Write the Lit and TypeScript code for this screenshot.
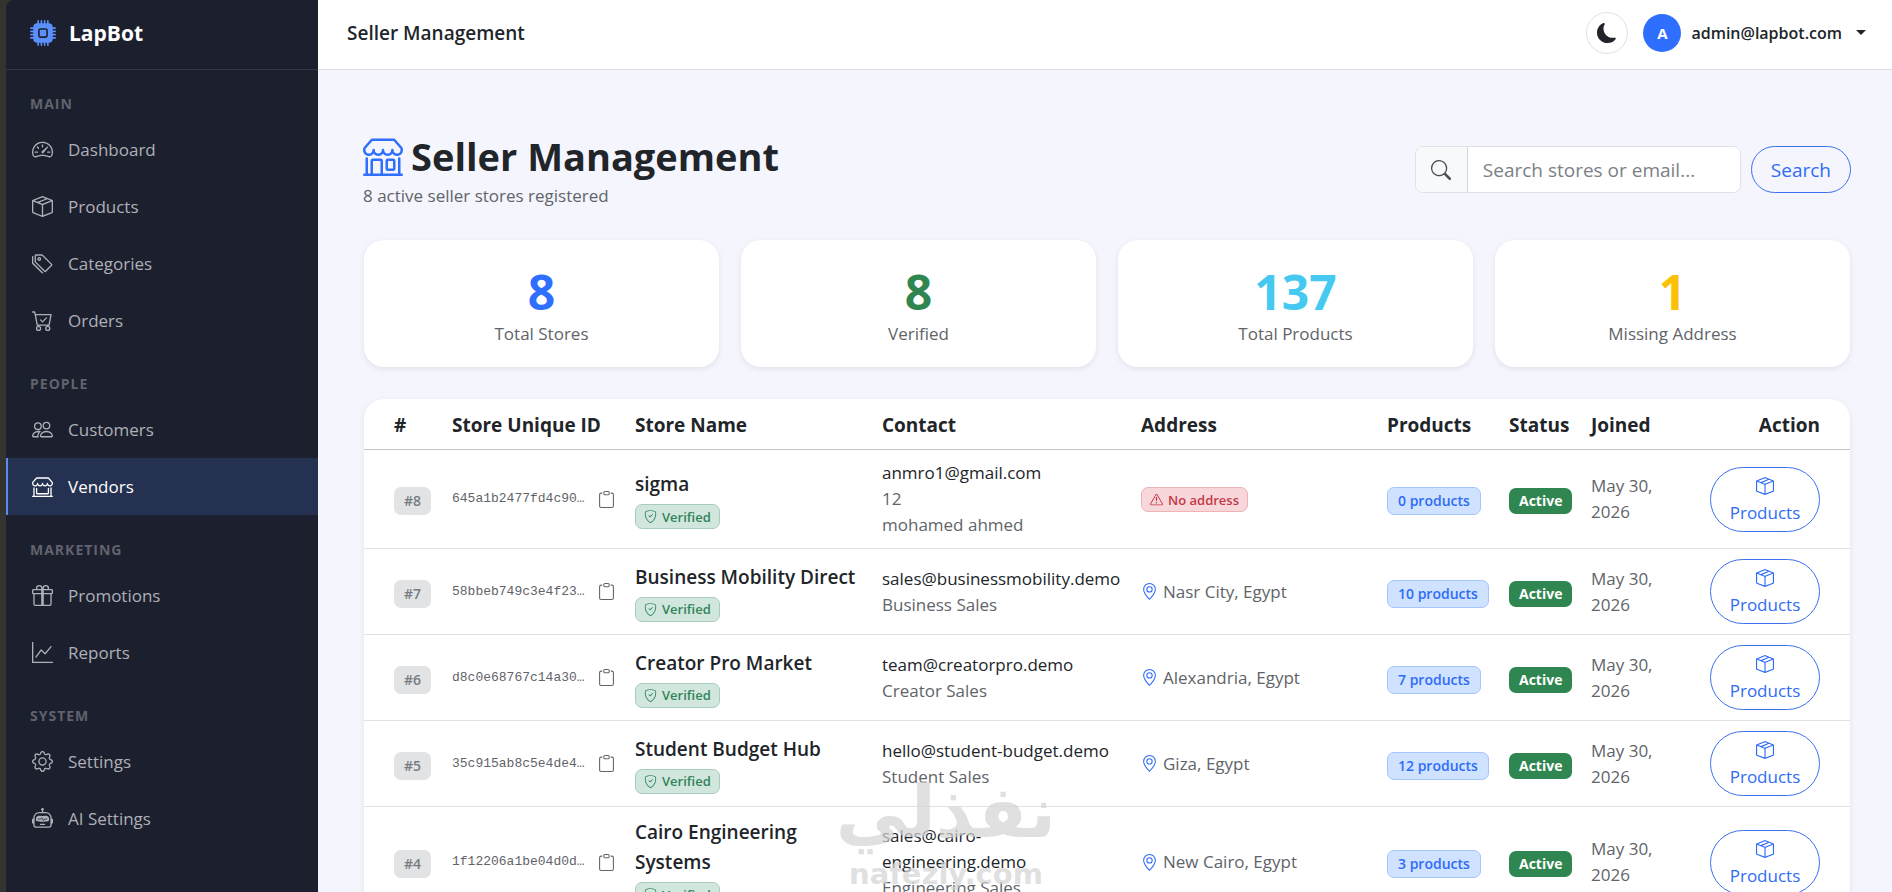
import { LitElement, html, css, svg } from "lit";
import { customElement, property } from "lit/decorators.js";
import { classMap } from "lit/directives/class-map.js";

const AWNING =
  "M2.97 1.35A1 1 0 0 1 3.73 1h8.54a1 1 0 0 1 .76.35l2.609 3.044A1.5 1.5 0 0 1 16 5.37v.255a2.375 2.375 0 0 1-4.25 1.458A2.37 2.37 0 0 1 9.875 8 2.37 2.37 0 0 1 8 7.083 2.37 2.37 0 0 1 6.125 8a2.37 2.37 0 0 1-1.875-.917A2.375 2.375 0 0 1 0 5.625V5.37a1.5 1.5 0 0 1 .361-.976zm1.78 4.275a1.375 1.375 0 0 0 2.75 0 .5.5 0 0 1 1 0 1.375 1.375 0 0 0 2.75 0 .5.5 0 0 1 1 0 1.375 1.375 0 1 0 2.75 0V5.37a.5.5 0 0 0-.12-.325L12.27 2H3.73L1.12 5.045A.5.5 0 0 0 1 5.37v.255a1.375 1.375 0 0 0 2.75 0 .5.5 0 0 1 1 0";

const ICONS: Record<string, string[]> = {
  cpu: [
    "M6.5 6a.5.5 0 0 0-.5.5v3a.5.5 0 0 0 .5.5h3a.5.5 0 0 0 .5-.5v-3a.5.5 0 0 0-.5-.5z",
    "M5.5.5a.5.5 0 0 0-1 0V2A2.5 2.5 0 0 0 2 4.5H.5a.5.5 0 0 0 0 1H2v1H.5a.5.5 0 0 0 0 1H2v1H.5a.5.5 0 0 0 0 1H2v1H.5a.5.5 0 0 0 0 1H2A2.5 2.5 0 0 0 4.5 14v1.5a.5.5 0 0 0 1 0V14h1v1.5a.5.5 0 0 0 1 0V14h1v1.5a.5.5 0 0 0 1 0V14h1v1.5a.5.5 0 0 0 1 0V14a2.5 2.5 0 0 0 2.5-2.5h1.5a.5.5 0 0 0 0-1H14v-1h1.5a.5.5 0 0 0 0-1H14v-1h1.5a.5.5 0 0 0 0-1H14v-1h1.5a.5.5 0 0 0 0-1H14A2.5 2.5 0 0 0 11.5 2V.5a.5.5 0 0 0-1 0V2h-1V.5a.5.5 0 0 0-1 0V2h-1V.5a.5.5 0 0 0-1 0V2h-1zm1 4.5h3A1.5 1.5 0 0 1 11 6.5v3A1.5 1.5 0 0 1 9.5 11h-3A1.5 1.5 0 0 1 5 9.5v-3A1.5 1.5 0 0 1 6.5 5",
  ],
  speedometer: [
    "M8 4a.5.5 0 0 1 .5.5V6a.5.5 0 0 1-1 0V4.5A.5.5 0 0 1 8 4M3.732 5.732a.5.5 0 0 1 .707 0l.915.914a.5.5 0 1 1-.708.708l-.914-.915a.5.5 0 0 1 0-.707M2 10a.5.5 0 0 1 .5-.5h1.586a.5.5 0 0 1 0 1H2.5A.5.5 0 0 1 2 10m9.5 0a.5.5 0 0 1 .5-.5h1.5a.5.5 0 0 1 0 1H12a.5.5 0 0 1-.5-.5m.754-4.246a.39.39 0 0 0-.527-.02L7.547 9.31a.91.91 0 1 0 1.302 1.258l3.434-4.297a.39.39 0 0 0-.029-.518z",
    "M0 10a8 8 0 1 1 15.547 2.661c-.442 1.253-1.845 1.602-2.932 1.25C11.309 13.488 9.475 13 8 13c-1.474 0-3.31.488-4.615.911-1.087.352-2.49.003-2.932-1.25A8 8 0 0 1 0 10m8-7a7 7 0 0 0-6.603 9.329c.203.575.923.876 1.68.63C4.397 12.533 6.358 12 8 12s3.604.532 4.923.96c.757.245 1.477-.056 1.68-.631A7 7 0 0 0 8 3",
  ],
  box: [
    "M8.186 1.113a.5.5 0 0 0-.372 0L1.846 3.5l2.404.961L10.404 2zm3.564 1.426L5.596 5 8 5.961 14.154 3.5zm3.25 1.7-6.5 2.6v7.922l6.5-2.6V4.24zM7.5 14.762V6.838L1 4.239v7.923zM7.443.184a1.5 1.5 0 0 1 1.114 0l7.129 2.852A.5.5 0 0 1 16 3.5v8.662a1 1 0 0 1-.629.928l-7.185 2.874a.5.5 0 0 1-.372 0L.63 13.09a1 1 0 0 1-.63-.928V3.5a.5.5 0 0 1 .314-.464z",
  ],
  tags: [
    "M3 2v4.586l7 7L14.586 9l-7-7zM2 2a1 1 0 0 1 1-1h4.586a1 1 0 0 1 .707.293l7 7a1 1 0 0 1 0 1.414l-4.586 4.586a1 1 0 0 1-1.414 0l-7-7A1 1 0 0 1 2 6.586z",
    "M5.5 5a.5.5 0 1 1 0-1 .5.5 0 0 1 0 1m0 1a1.5 1.5 0 1 0 0-3 1.5 1.5 0 0 0 0 3M1 7.086a1 1 0 0 0 .293.707L8.75 15.25l-.043.043a1 1 0 0 1-1.414 0l-7-7A1 1 0 0 1 0 7.586V3a1 1 0 0 1 1-1z",
  ],
  cart: [
    "M11.354 6.354a.5.5 0 0 0-.708-.708L8 8.293 6.854 7.146a.5.5 0 1 0-.708.708l1.5 1.5a.5.5 0 0 0 .708 0z",
    "M.5 1a.5.5 0 0 0 0 1h1.11l.401 1.607 1.498 7.985A.5.5 0 0 0 4 12h1a2 2 0 1 0 0 4 2 2 0 0 0 0-4h7a2 2 0 1 0 0 4 2 2 0 0 0 0-4h1a.5.5 0 0 0 .491-.408l1.5-8A.5.5 0 0 0 14.5 3H2.89l-.405-1.621A.5.5 0 0 0 2 1zm3.915 10L3.102 4h10.796l-1.313 7zM6 14a1 1 0 1 1-2 0 1 1 0 0 1 2 0m7 0a1 1 0 1 1-2 0 1 1 0 0 1 2 0",
  ],
  people: [
    "M15 14s1 0 1-1-1-4-5-4-5 3-5 4 1 1 1 1zm-7.978-1L7 12.996c.001-.264.167-1.03.76-1.72C8.312 10.629 9.282 10 11 10c1.717 0 2.687.63 3.24 1.276.593.69.758 1.457.76 1.72l-.008.002-.014.002zM11 7a2 2 0 1 0 0-4 2 2 0 0 0 0 4m3-2a3 3 0 1 1-6 0 3 3 0 0 1 6 0M6.936 9.28a6 6 0 0 0-1.23-.247A7 7 0 0 0 5 9c-4 0-5 3-5 4q0 1 1 1h4.216A2.24 2.24 0 0 1 5 13c0-1.01.377-2.042 1.09-2.904.243-.294.526-.569.846-.816M4.92 10A5.5 5.5 0 0 0 4 13H1c0-.26.164-1.03.76-1.724.545-.636 1.492-1.256 3.16-1.275ZM1.5 5.5a3 3 0 1 1 6 0 3 3 0 0 1-6 0m3-2a2 2 0 1 0 0 4 2 2 0 0 0 0-4",
  ],
  shop: [
    AWNING,
    "M1.5 8.5A.5.5 0 0 1 2 9v6h1v-5a1 1 0 0 1 1-1h3a1 1 0 0 1 1 1v5h6V9a.5.5 0 0 1 1 0v6h.5a.5.5 0 0 1 0 1H.5a.5.5 0 0 1 0-1H1V9a.5.5 0 0 1 .5-.5M4 15h3v-5H4zm5-5a1 1 0 0 1 1-1h2a1 1 0 0 1 1 1v3a1 1 0 0 1-1 1h-2a1 1 0 0 1-1-1zm3 0h-2v3h2z",
  ],
  shopWindow: [
    AWNING,
    "M1.5 8.5A.5.5 0 0 1 2 9v6h12V9a.5.5 0 0 1 1 0v6h.5a.5.5 0 0 1 0 1H.5a.5.5 0 0 1 0-1H1V9a.5.5 0 0 1 .5-.5m2 .5a.5.5 0 0 1 .5.5V13h8V9.5a.5.5 0 0 1 1 0V13a1 1 0 0 1-1 1H4a1 1 0 0 1-1-1V9.5a.5.5 0 0 1 .5-.5",
  ],
  gift: [
    "M3 2.5a2.5 2.5 0 0 1 5 0 2.5 2.5 0 0 1 5 0v.006c0 .07 0 .27-.038.494H15a1 1 0 0 1 1 1v2a1 1 0 0 1-1 1v7.5a1.5 1.5 0 0 1-1.5 1.5h-11A1.5 1.5 0 0 1 1 14.5V7a1 1 0 0 1-1-1V4a1 1 0 0 1 1-1h2.038A3 3 0 0 1 3 2.506zm1.068.5H7v-.5a1.5 1.5 0 1 0-3 0c0 .085.002.274.045.43zM9 3h2.932l.023-.07c.043-.156.045-.345.045-.43a1.5 1.5 0 0 0-3 0zM1 4v2h6V4zm8 0v2h6V4zm5 3H9v8h4.5a.5.5 0 0 0 .5-.5zm-7 8V7H2v7.5a.5.5 0 0 0 .5.5z",
  ],
  graph: [
    "M0 0h1v15h15v1H0zm14.817 3.113a.5.5 0 0 1 .07.704l-4.5 5.5a.5.5 0 0 1-.74.037L7.06 6.767l-3.656 5.027a.5.5 0 0 1-.808-.588l4-5.5a.5.5 0 0 1 .758-.06l2.609 2.61 4.15-5.073a.5.5 0 0 1 .704-.07",
  ],
  gear: [
    "M8 4.754a3.246 3.246 0 1 0 0 6.492 3.246 3.246 0 0 0 0-6.492M5.754 8a2.246 2.246 0 1 1 4.492 0 2.246 2.246 0 0 1-4.492 0",
    "M9.796 1.343c-.527-1.79-3.065-1.79-3.592 0l-.094.319a.873.873 0 0 1-1.255.52l-.292-.16c-1.64-.892-3.433.902-2.54 2.541l.159.292a.873.873 0 0 1-.52 1.255l-.319.094c-1.79.527-1.79 3.065 0 3.592l.319.094a.873.873 0 0 1 .52 1.255l-.16.292c-.892 1.64.901 3.434 2.541 2.54l.292-.159a.873.873 0 0 1 1.255.52l.094.319c.527 1.79 3.065 1.79 3.592 0l.094-.319a.873.873 0 0 1 1.255-.52l.292.16c1.64.893 3.434-.902 2.54-2.541l-.159-.292a.873.873 0 0 1 .52-1.255l.319-.094c1.79-.527 1.79-3.065 0-3.592l-.319-.094a.873.873 0 0 1-.52-1.255l.16-.292c.893-1.64-.902-3.433-2.541-2.54l-.292.159a.873.873 0 0 1-1.255-.52zm-2.633.283c.246-.835 1.428-.835 1.674 0l.094.319a1.873 1.873 0 0 0 2.693 1.115l.291-.16c.764-.415 1.6.42 1.184 1.185l-.159.292a1.873 1.873 0 0 0 1.116 2.692l.318.094c.835.246.835 1.428 0 1.674l-.319.094a1.873 1.873 0 0 0-1.115 2.693l.16.291c.415.764-.42 1.6-1.185 1.184l-.291-.159a1.873 1.873 0 0 0-2.693 1.116l-.094.318c-.246.835-1.428.835-1.674 0l-.094-.319a1.873 1.873 0 0 0-2.692-1.115l-.292.16c-.764.415-1.6-.42-1.184-1.185l.159-.291A1.873 1.873 0 0 0 1.945 8.93l-.319-.094c-.835-.246-.835-1.428 0-1.674l.319-.094A1.873 1.873 0 0 0 3.06 4.377l-.16-.292c-.415-.764.42-1.6 1.185-1.184l.292.159a1.873 1.873 0 0 0 2.692-1.115z",
  ],
  robot: [
    "M6 12.5a.5.5 0 0 1 .5-.5h3a.5.5 0 0 1 0 1h-3a.5.5 0 0 1-.5-.5M3 8.062C3 6.76 4.235 5.765 5.53 5.886a26.6 26.6 0 0 0 4.94 0C11.765 5.765 13 6.76 13 8.062v1.157a.93.93 0 0 1-.765.935c-.845.147-2.34.346-4.235.346s-3.39-.2-4.235-.346A.93.93 0 0 1 3 9.219zm4.542-.827a.25.25 0 0 0-.217.068l-.92.9a25 25 0 0 1-1.871-.183.25.25 0 0 0-.068.495c.55.076 1.232.149 2.02.193a.25.25 0 0 0 .189-.071l.754-.736.847 1.71a.25.25 0 0 0 .404.062l.932-.97a25 25 0 0 0 1.922-.188.25.25 0 0 0-.068-.495c-.538.074-1.207.145-1.98.189a.25.25 0 0 0-.166.076l-.754.785-.842-1.7a.25.25 0 0 0-.182-.135",
    "M8.5 1.866a1 1 0 1 0-1 0V3h-2A4.5 4.5 0 0 0 1 7.5V8a1 1 0 0 0-1 1v2a1 1 0 0 0 1 1v1a2 2 0 0 0 2 2h10a2 2 0 0 0 2-2v-1a1 1 0 0 0 1-1V9a1 1 0 0 0-1-1v-.5A4.5 4.5 0 0 0 10.5 3h-2zM14 7.5V13a1 1 0 0 1-1 1H3a1 1 0 0 1-1-1V7.5A3.5 3.5 0 0 1 5.5 4h5A3.5 3.5 0 0 1 14 7.5",
  ],
  moon: [
    "M6 .278a.77.77 0 0 1 .08.858 7.2 7.2 0 0 0-.878 3.46c0 4.021 3.278 7.277 7.318 7.277q.792-.001 1.533-.16a.79.79 0 0 1 .81.316.73.73 0 0 1-.031.893A8.35 8.35 0 0 1 8.344 16C3.734 16 0 12.286 0 7.71 0 4.266 2.114 1.312 5.124.06A.75.75 0 0 1 6 .278",
  ],
  search: [
    "M11.742 10.344a6.5 6.5 0 1 0-1.397 1.398h-.001q.044.06.098.115l3.85 3.85a1 1 0 0 0 1.415-1.414l-3.85-3.85a1 1 0 0 0-.115-.1zM12 6.5a5.5 5.5 0 1 1-11 0 5.5 5.5 0 0 1 11 0",
  ],
  clipboard: [
    "M4 1.5H3a2 2 0 0 0-2 2V14a2 2 0 0 0 2 2h10a2 2 0 0 0 2-2V3.5a2 2 0 0 0-2-2h-1v1h1a1 1 0 0 1 1 1V14a1 1 0 0 1-1 1H3a1 1 0 0 1-1-1V3.5a1 1 0 0 1 1-1h1z",
    "M9.5 1a.5.5 0 0 1 .5.5v1a.5.5 0 0 1-.5.5h-3a.5.5 0 0 1-.5-.5v-1a.5.5 0 0 1 .5-.5zm-3-1A1.5 1.5 0 0 0 5 1.5v1A1.5 1.5 0 0 0 6.5 4h3A1.5 1.5 0 0 0 11 2.5v-1A1.5 1.5 0 0 0 9.5 0z",
  ],
  shield: [
    "M5.338 1.59a61 61 0 0 0-2.837.856.48.48 0 0 0-.328.39c-.554 4.157.726 7.19 2.253 9.188a10.7 10.7 0 0 0 2.287 2.233c.346.244.652.42.893.533q.18.085.293.118a1 1 0 0 0 .101.025 1 1 0 0 0 .1-.025q.114-.034.294-.118c.24-.113.547-.29.893-.533a10.7 10.7 0 0 0 2.287-2.233c1.527-1.997 2.807-5.031 2.253-9.188a.48.48 0 0 0-.328-.39c-.651-.213-1.75-.56-2.837-.855C9.552 1.29 8.531 1.067 8 1.067c-.53 0-1.552.223-2.662.524zM5.072.56C6.157.265 7.31 0 8 0s1.843.265 2.928.56c1.11.3 2.229.655 2.887.87a1.54 1.54 0 0 1 1.044 1.262c.596 4.477-.787 7.795-2.465 9.99a11.8 11.8 0 0 1-2.517 2.453 7 7 0 0 1-1.048.625c-.28.132-.581.24-.829.24s-.548-.108-.829-.24a7 7 0 0 1-1.048-.625 11.8 11.8 0 0 1-2.517-2.453C1.928 10.487.545 7.169 1.141 2.692A1.54 1.54 0 0 1 2.185 1.43 63 63 0 0 1 5.072.56",
    "M10.854 5.146a.5.5 0 0 1 0 .708l-3 3a.5.5 0 0 1-.708 0l-1.5-1.5a.5.5 0 1 1 .708-.708L7.5 7.793l2.646-2.647a.5.5 0 0 1 .708 0",
  ],
  warning: [
    "M7.938 2.016A.13.13 0 0 1 8.002 2a.13.13 0 0 1 .063.016.15.15 0 0 1 .054.057l6.857 11.667c.036.06.035.124.002.183a.2.2 0 0 1-.054.06.1.1 0 0 1-.066.017H1.146a.1.1 0 0 1-.066-.017.2.2 0 0 1-.054-.06.18.18 0 0 1 .002-.183L7.884 2.073a.15.15 0 0 1 .054-.057m1.044-.45a1.13 1.13 0 0 0-1.96 0L.165 13.233c-.457.778.091 1.767.98 1.767h13.713c.889 0 1.438-.99.98-1.767z",
    "M7.002 12a1 1 0 1 1 2 0 1 1 0 0 1-2 0M7.1 5.995a.905.905 0 1 1 1.8 0l-.35 3.507a.552.552 0 0 1-1.1 0z",
  ],
  pin: [
    "M12.166 8.94c-.524 1.062-1.234 2.12-1.96 3.07A32 32 0 0 1 8 14.58a32 32 0 0 1-2.206-2.57c-.726-.95-1.436-2.008-1.96-3.07C3.304 7.867 3 6.862 3 6a5 5 0 0 1 10 0c0 .862-.305 1.867-.834 2.94M8 16s6-5.686 6-10A6 6 0 0 0 2 6c0 4.314 6 10 6 10",
    "M8 8a2 2 0 1 1 0-4 2 2 0 0 1 0 4m0 1a3 3 0 1 0 0-6 3 3 0 0 0 0 6",
  ],
};

@customElement("lb-icon")
class LbIcon extends LitElement {
  @property() name = "";

  static styles = css`
    :host {
      display: inline-block;
      width: 18px;
      height: 18px;
      flex: none;
    }
    svg {
      display: block;
      width: 100%;
      height: 100%;
      fill: currentColor;
    }
  `;

  render() {
    return html`<svg viewBox="0 0 16 16" aria-hidden="true">
      ${(ICONS[this.name] ?? []).map((d) => svg`<path d=${d}></path>`)}
    </svg>`;
  }
}

interface NavItem {
  label: string;
  icon: string;
}

const NAV: { title: string; items: NavItem[] }[] = [
  {
    title: "MAIN",
    items: [
      { label: "Dashboard", icon: "speedometer" },
      { label: "Products", icon: "box" },
      { label: "Categories", icon: "tags" },
      { label: "Orders", icon: "cart" },
    ],
  },
  {
    title: "PEOPLE",
    items: [
      { label: "Customers", icon: "people" },
      { label: "Vendors", icon: "shopWindow" },
    ],
  },
  {
    title: "MARKETING",
    items: [
      { label: "Promotions", icon: "gift" },
      { label: "Reports", icon: "graph" },
    ],
  },
  {
    title: "SYSTEM",
    items: [
      { label: "Settings", icon: "gear" },
      { label: "AI Settings", icon: "robot" },
    ],
  },
];

@customElement("lb-sidebar")
class LbSidebar extends LitElement {
  @property() active = "";

  static styles = css`
    :host {
      display: block;
      width: 312px;
      flex: none;
      background: #1c1f2e;
      border-top-left-radius: 8px;
      overflow: hidden;
    }
    .brand {
      display: flex;
      align-items: center;
      gap: 13px;
      height: 70px;
      box-sizing: border-box;
      padding: 0 24px 4px;
      border-bottom: 1px solid #33364a;
      color: #fff;
      font-size: 21px;
      font-weight: 700;
      text-decoration: none;
    }
    .logo {
      width: 26px;
      height: 26px;
      color: #5b8ffb;
    }
    nav {
      padding-top: 9px;
    }
    .group {
      margin: 0;
      padding: 14px 24px 0;
      height: 42px;
      box-sizing: border-box;
      font-size: 14px;
      line-height: 22px;
      font-weight: 700;
      letter-spacing: 1px;
      color: #60636d;
    }
    .links {
      list-style: none;
      margin: 0 0 10px;
      padding: 0;
    }
    .link {
      display: flex;
      align-items: center;
      gap: 15px;
      height: 57px;
      box-sizing: border-box;
      padding: 0 24px;
      border-left: 2px solid transparent;
      color: #aeb0b8;
      font-size: 17px;
      line-height: 26px;
      text-decoration: none;
    }
    .link lb-icon {
      width: 21px;
      height: 21px;
    }
    .link.active {
      background: #253150;
      border-left-color: #5b8bee;
      color: #fff;
    }
  `;

  render() {
    return html`
      <a class="brand" href="#"><lb-icon class="logo" name="cpu"></lb-icon>LapBot</a>
      <nav aria-label="Admin">
        ${NAV.map(
          (g) => html`
            <h2 class="group">${g.title}</h2>
            <ul class="links">
              ${g.items.map(
                (i) => html`<li>
                  <a class=${classMap({ link: true, active: i.label === this.active })} href="#"
                    ><lb-icon name=${i.icon}></lb-icon>${i.label}</a
                  >
                </li>`
              )}
            </ul>
          `
        )}
      </nav>
    `;
  }
}

interface Store {
  id: number;
  uid: string;
  name: string;
  email: string;
  lines: string[];
  address: string;
  products: number;
}

const STORES: Store[] = [
  { id: 8, uid: "645a1b2477fd4c90…", name: "sigma", email: "anmro1@gmail.com", lines: ["12", "mohamed ahmed"], address: "", products: 0 },
  { id: 7, uid: "58bbeb749c3e4f23…", name: "Business Mobility Direct", email: "sales@businessmobility.demo", lines: ["Business Sales"], address: "Nasr City, Egypt", products: 10 },
  { id: 6, uid: "d8c0e68767c14a30…", name: "Creator Pro Market", email: "team@creatorpro.demo", lines: ["Creator Sales"], address: "Alexandria, Egypt", products: 7 },
  { id: 5, uid: "35c915ab8c5e4de4…", name: "Student Budget Hub", email: "hello@student-budget.demo", lines: ["Student Sales"], address: "Giza, Egypt", products: 12 },
  { id: 4, uid: "1f12206a1be04d0d…", name: "Cairo Engineering Systems", email: "sales@cairo-engineering.demo", lines: ["Engineering Sales"], address: "New Cairo, Egypt", products: 3 },
];

@customElement("lb-store-table")
class LbStoreTable extends LitElement {
  static styles = css`
    :host {
      display: block;
      background: #fff;
      border-radius: 20px;
      box-shadow: 0 2px 6px rgba(0, 0, 0, 0.08);
      overflow: hidden;
    }
    table {
      width: 100%;
      table-layout: fixed;
      border-collapse: separate;
      border-spacing: 0;
    }
    .c-num { width: 78px; }
    .c-id { width: 183px; }
    .c-name { width: 247px; }
    .c-contact { width: 259px; }
    .c-products { width: 122px; }
    .c-status { width: 82px; }
    .c-joined { width: 98px; }
    .c-action { width: 171px; }
    th {
      height: 51px;
      box-sizing: border-box;
      padding: 2px 10px 0;
      border-bottom: 1px solid #c3c5c9;
      text-align: left;
      font-size: 19px;
      line-height: 30px;
      font-weight: 700;
      color: #212529;
    }
    td {
      padding: 10px;
      border-bottom: 1px solid #dee2e6;
      vertical-align: middle;
      font-size: 17px;
      line-height: 26px;
      color: #5f6469;
    }
    th:first-child,
    td:first-child {
      padding-left: 30px;
    }
    th:last-child,
    td:last-child {
      padding-right: 30px;
      text-align: right;
    }
    .badge {
      display: inline-flex;
      align-items: center;
      box-sizing: border-box;
      border: 1px solid transparent;
      border-radius: 7px;
      font-weight: 600;
      white-space: nowrap;
      vertical-align: middle;
    }
    .num,
    .count,
    .status {
      margin-top: 4px;
      font-size: 14px;
    }
    .num {
      height: 28px;
      padding: 0 9px;
      background: #e2e3e5;
      color: #777c82;
    }
    .verified,
    .missing {
      height: 25px;
      gap: 5px;
      padding: 0 8px;
      font-size: 13px;
    }
    .verified {
      margin-top: 5px;
      background: #d1e7dd;
      border-color: #a9cdbd;
      color: #30845a;
    }
    .missing {
      background: #f8d7da;
      border-color: #eeb2b9;
      color: #c23748;
    }
    .verified lb-icon,
    .missing lb-icon {
      width: 13px;
      height: 13px;
    }
    .count {
      height: 28px;
      padding: 0 10px;
      background: #cfe2ff;
      border-color: #a6c6fb;
      color: #2f6cf6;
    }
    .status {
      height: 26px;
      padding: 0 9px;
      background: #2f8650;
      color: #fff;
      font-weight: 700;
    }
    .uid {
      display: flex;
      align-items: center;
      gap: 13px;
      font-family: "Liberation Mono", monospace;
      font-size: 13px;
    }
    .copy {
      display: block;
      padding: 0;
      border: 0;
      background: none;
      color: #5f6469;
    }
    .copy lb-icon {
      display: block;
      width: 17px;
      height: 17px;
    }
    .name {
      font-size: 19px;
      line-height: 30px;
      font-weight: 600;
      color: #212529;
    }
    .stack {
      display: flex;
      flex-direction: column;
      align-items: flex-start;
    }
    .email {
      color: #212529;
    }
    .address {
      display: flex;
      align-items: center;
      gap: 5px;
    }
    .address lb-icon {
      width: 17px;
      height: 17px;
      color: #2f6cf6;
    }
    .open {
      display: inline-flex;
      flex-direction: column;
      align-items: center;
      width: 110px;
      height: 65px;
      box-sizing: border-box;
      padding: 9px 0 5px;
      justify-content: space-between;
      border: 1px solid #3b71ee;
      border-radius: 33px;
      color: #2f6cf6;
      line-height: 26px;
      text-decoration: none;
      vertical-align: middle;
    }
  `;

  private row(s: Store) {
    return html`<tr>
      <td><span class="badge num">#${s.id}</span></td>
      <td>
        <div class="uid">
          <span>${s.uid}</span>
          <button class="copy" type="button" aria-label="Copy store ID"><lb-icon name="clipboard"></lb-icon></button>
        </div>
      </td>
      <td>
        <div class="stack">
          <div class="name">${s.name}</div>
          <span class="badge verified"><lb-icon name="shield"></lb-icon>Verified</span>
        </div>
      </td>
      <td>
        <div class="email">${s.email}</div>
        ${s.lines.map((l) => html`<div>${l}</div>`)}
      </td>
      <td>
        ${s.address
          ? html`<div class="address"><lb-icon name="pin"></lb-icon>${s.address}</div>`
          : html`<span class="badge missing"><lb-icon name="warning"></lb-icon>No address</span>`}
      </td>
      <td><span class="badge count">${s.products} products</span></td>
      <td><span class="badge status">Active</span></td>
      <td>May 30, 2026</td>
      <td><a class="open" href="#"><lb-icon name="box"></lb-icon>Products</a></td>
    </tr>`;
  }

  render() {
    return html`<table>
      <colgroup>
        <col class="c-num" />
        <col class="c-id" />
        <col class="c-name" />
        <col class="c-contact" />
        <col />
        <col class="c-products" />
        <col class="c-status" />
        <col class="c-joined" />
        <col class="c-action" />
      </colgroup>
      <thead>
        <tr>
          ${["#", "Store Unique ID", "Store Name", "Contact", "Address", "Products", "Status", "Joined", "Action"].map(
            (h) => html`<th scope="col">${h}</th>`
          )}
        </tr>
      </thead>
      <tbody>
        ${STORES.map((s) => this.row(s))}
      </tbody>
    </table>`;
  }
}

const STATS = [
  { value: "8", label: "Total Stores", tone: "blue" },
  { value: "8", label: "Verified", tone: "green" },
  { value: "137", label: "Total Products", tone: "cyan" },
  { value: "1", label: "Missing Address", tone: "yellow" },
];

@customElement("app-root")
class AppRoot extends LitElement {
  static styles = css`
    :host {
      display: block;
      font-family: "Open Sans", "Noto Sans", sans-serif;
      color: #212529;
    }
    .shell {
      position: relative;
      display: flex;
      height: 100vh;
      box-sizing: border-box;
      padding-left: 6px;
      background: #333330;
      overflow: hidden;
    }
    .page {
      flex: 1;
      min-width: 0;
      display: flex;
      flex-direction: column;
      background: #f4f5fd;
    }
    .topbar {
      display: flex;
      align-items: center;
      justify-content: space-between;
      height: 70px;
      flex: none;
      box-sizing: border-box;
      padding: 0 26px 4px 29px;
      background: #fff;
      border-bottom: 1px solid #dcdfe3;
    }
    .crumb {
      font-size: 19px;
      font-weight: 600;
    }
    .user {
      display: flex;
      align-items: center;
      gap: 15px;
    }
    .theme {
      display: flex;
      align-items: center;
      justify-content: center;
      width: 42px;
      height: 42px;
      padding: 0;
      border: 1px solid #dee2e6;
      border-radius: 50%;
      background: #fff;
      color: #212529;
    }
    .theme lb-icon {
      width: 20px;
      height: 20px;
    }
    .account {
      display: flex;
      align-items: center;
      gap: 10px;
      padding: 0;
      border: 0;
      background: none;
      color: #212529;
      font: inherit;
      font-size: 16px;
      font-weight: 600;
    }
    .avatar {
      display: flex;
      align-items: center;
      justify-content: center;
      width: 38px;
      height: 38px;
      border-radius: 50%;
      background: #2f6fff;
      color: #fff;
      font-size: 15px;
      font-weight: 700;
    }
    .caret {
      margin-left: 4px;
      border-top: 5px solid currentColor;
      border-left: 5px solid transparent;
      border-right: 5px solid transparent;
    }
    .content {
      flex: 1;
      min-height: 0;
      overflow-y: auto;
      scrollbar-width: none;
      padding: 60px 42px 40px 46px;
    }
    .head {
      display: flex;
      align-items: center;
      justify-content: space-between;
      gap: 24px;
      margin: 0 -1px;
      padding-bottom: 31px;
    }
    .title {
      display: flex;
      align-items: center;
      gap: 8px;
      margin: 0;
      font-size: 38px;
      line-height: 52px;
      font-weight: 700;
    }
    .title lb-icon {
      width: 40px;
      height: 40px;
      color: #2f6fff;
    }
    .sub {
      margin: 0;
      font-size: 17px;
      line-height: 27px;
      color: #5f6469;
    }
    .search {
      display: flex;
      gap: 10px;
      height: 47px;
      font-size: 19px;
    }
    .group {
      display: flex;
      width: 326px;
      box-sizing: border-box;
      border: 1px solid #dee2e6;
      border-radius: 8px;
      overflow: hidden;
      background: #fff;
    }
    .glass {
      display: flex;
      align-items: center;
      justify-content: center;
      width: 51px;
      flex: none;
      border-right: 1px solid #d3d6da;
      background: #f8f9fb;
      color: #4b4f54;
    }
    .glass lb-icon {
      width: 20px;
      height: 20px;
    }
    .field {
      flex: 1;
      min-width: 0;
      border: 0;
      padding: 0 15px;
      background: #fff;
      font: inherit;
      color: #212529;
    }
    .field::placeholder {
      color: #7b8087;
      opacity: 1;
    }
    .go {
      padding: 0 19px;
      border: 1px solid #3b71ee;
      border-radius: 24px;
      background: transparent;
      color: #2f6cf6;
      font: inherit;
    }
    .stats {
      display: grid;
      grid-template-columns: repeat(4, minmax(0, 1fr));
      gap: 22px;
      margin-bottom: 32px;
    }
    .stat {
      display: flex;
      flex-direction: column;
      align-items: center;
      gap: 1px;
      padding: 23px 16px 20px;
      background: #fff;
      border-radius: 20px;
      box-shadow: 0 2px 6px rgba(0, 0, 0, 0.08);
    }
    .value {
      font-size: 48px;
      line-height: 57px;
      font-weight: 700;
    }
    .label {
      font-size: 17px;
      line-height: 26px;
      color: #5f6469;
    }
    .blue { color: #2f6fff; }
    .green { color: #2f8650; }
    .cyan { color: #45c9f1; }
    .yellow { color: #fac105; }
    .watermark {
      position: absolute;
      left: 0;
      right: 0;
      bottom: 0;
      display: flex;
      flex-direction: column;
      align-items: center;
      gap: 15px;
      color: #d4d4d4;
      opacity: 0.7;
      pointer-events: none;
      font-family: "DejaVu Sans", sans-serif;
      font-weight: 700;
    }
    .mark-ar {
      font-size: 72px;
      line-height: 60px;
    }
    .mark-en {
      font-size: 29px;
      line-height: 35px;
    }
  `;

  render() {
    return html`
      <div class="shell">
        <lb-sidebar active="Vendors"></lb-sidebar>
        <div class="page">
          <header class="topbar">
            <span class="crumb">Seller Management</span>
            <div class="user">
              <button class="theme" type="button" aria-label="Toggle dark mode"><lb-icon name="moon"></lb-icon></button>
              <button class="account" type="button">
                <span class="avatar">A</span>
                <span>admin@lapbot.com</span>
                <span class="caret"></span>
              </button>
            </div>
          </header>
          <main class="content">
            <div class="head">
              <div>
                <h1 class="title"><lb-icon name="shop"></lb-icon>Seller Management</h1>
                <p class="sub">8 active seller stores registered</p>
              </div>
              <form class="search" role="search">
                <div class="group">
                  <label class="glass" for="q" aria-label="Search stores"><lb-icon name="search"></lb-icon></label>
                  <input class="field" id="q" type="text" placeholder="Search stores or email..." />
                </div>
                <button class="go" type="button">Search</button>
              </form>
            </div>
            <section class="stats">
              ${STATS.map(
                (s) => html`<div class="stat">
                  <span class="value ${s.tone}">${s.value}</span>
                  <span class="label">${s.label}</span>
                </div>`
              )}
            </section>
            <lb-store-table></lb-store-table>
          </main>
        </div>
        <div class="watermark">
          <span class="mark-ar" lang="ar" dir="rtl">نفذلي</span>
          <span class="mark-en">nafezly.com</span>
        </div>
      </div>
    `;
  }
}
